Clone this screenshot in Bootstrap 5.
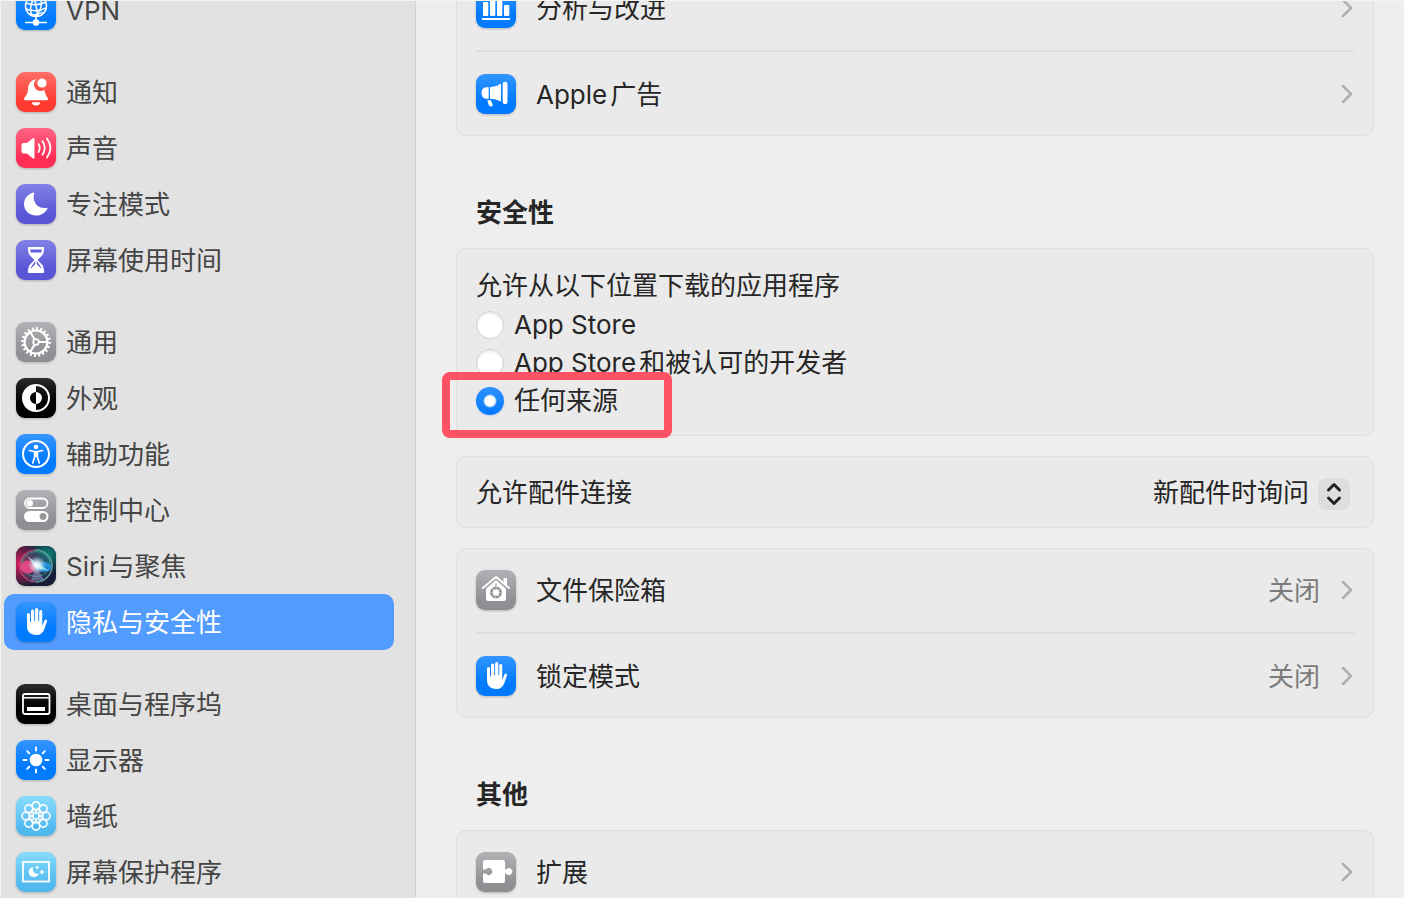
<!DOCTYPE html>
<html lang="zh-CN">
<head>
<meta charset="utf-8">
<meta name="viewport" content="width=device-width, initial-scale=1">
<title>隐私与安全性</title>
<link href="https://cdn.jsdelivr.net/npm/bootstrap@5.3.0/dist/css/bootstrap.min.css" rel="stylesheet">
<style>
  body { background: #eee; color: #262626; font-family: Inter, "Noto Sans CJK SC", sans-serif; font-size: 26px; line-height: 38px; }
  a { color: inherit; text-decoration: none; }
  .settings { border-top: 1px solid #f4f4f4; border-left: 1px solid #f2f2f2; }
  .side { width: 415px; background: #e2e2e2; border-right: 1px solid #d2d2d2; color: #454545; padding: 0 21px 0 3px; }
  .side-group { margin-bottom: 26px; }
  .side-group:first-child { margin-top: -19px; }
  .side-link { height: 56px; padding: 2px 12px 0; gap: 10px; border-radius: 10px; }
  .side-link.active { background: #529bff; color: #fff; }
  .tile { width: 40px; height: 40px; margin-bottom: 2px; flex-shrink: 0; border-radius: 9px; filter: drop-shadow(0 1px 1px rgba(0,0,0,.22)); color: #fff; }
  .tile svg { display: block; width: 40px; height: 40px; }
  .t-blue { background: linear-gradient(#3395ff, #007aff 70%); color: #fff; }
  .t-red { background: linear-gradient(#ff6f66, #ff3b30 75%); }
  .t-pink { background: linear-gradient(#ff6384, #ff2d55 75%); }
  .t-indigo { background: linear-gradient(#8280e6, #5856d6 75%); }
  .t-gray { background: linear-gradient(#b1b1b6, #8e8e93 80%); color: #fff; }
  .t-black { background: linear-gradient(#2b2b2b, #000 60%); }
  .t-sky { background: linear-gradient(#87dcf9, #52b9ef 80%); }
  .t-siri { background: #171d36; overflow: hidden; }
  .latin { margin-right: 3px; }
  .pane { padding: 0 30px 0 40px; }
  .panel { background: #eaeaea; border-radius: 10px; box-shadow: inset 0 0 0 1px #dfdfdf; padding: 0 20px; margin-bottom: 20px; }
  .pane > .panel:first-child { margin-top: -35px; }
  .pane-row { height: 84px; gap: 20px; padding-top: 2px; }
  .pane-row + .pane-row { border-top: 2px solid #dedede; height: 86px; }
  .state { color: #7b7b7b; }
  .chev { width: 14px; height: 20px; margin-bottom: 2px; color: #b0b0b0; }
  .pane-title { font-size: 26px; line-height: 36px; font-weight: 700; margin: 59px 20px 17px; }
  .source { padding-top: 18px; padding-bottom: 16px; }
  .source legend { font-size: 26px; line-height: 40px; margin: 0; }
  .choice { height: 38px; gap: 10px; }
  .choice .form-check-input { width: 28px; height: 28px; margin: 0; border: 1px solid #cfcfcf; background-color: #fff; box-shadow: inset 0 2px 2px rgba(0,0,0,.07); }
  .choice .form-check-input:checked { border: 0; background: radial-gradient(circle, #fff 5px, transparent 7px), linear-gradient(#2f90ff, #007aff); box-shadow: 0 1px 2px rgba(0,80,255,.2); }
  .marker { left: -34px; top: -10px; width: 230px; height: 66px; border: 8px solid #ff5264; border-radius: 8px; pointer-events: none; }
  .accessory { height: 72px; padding: 2px 24px 0 20px; }
  .picker select { appearance: none; border: 0; background: none; color: inherit; padding: 0 40px 0 0; height: 38px; line-height: 38px; }
  .stepper { right: 0; top: 4px; width: 32px; height: 32px; border-radius: 8px; background: #dedede; pointer-events: none; }
</style>
</head>
<body>
<div class="settings d-flex vh-100 overflow-hidden">
  <nav class="side flex-shrink-0" aria-label="设置">
    <div class="side-group">
      <a href="#" class="side-link d-flex align-items-center"><span class="tile t-blue"><svg viewBox="0 0 40 40" fill="none" stroke="currentColor" stroke-width="1.5"><circle cx="20" cy="16" r="10.5"/><ellipse cx="20" cy="16" rx="5" ry="10.5" transform="rotate(12 20 16)"/><path d="M10 13q10 4 20-1M10 19q10 4 20-1M12 9q8 4 15-1M13 24q8 2 14-2M18 5.500l4 21M20 27v5M9 32.500h22" /><circle cx="20" cy="32.500" r="2.500" fill="currentColor"/></svg></span>VPN</a>
    </div>
    <div class="side-group">
      <a href="#" class="side-link d-flex align-items-center"><span class="tile t-red"><svg viewBox="0 0 40 40" fill="currentColor"><path d="M20.500 7.200c-5.600.6-8.500 5-8.500 10 0 6-4 7.500-4 9.800 0 .8.600 1.200 1.500 1.200h21c.9 0 1.500-.4 1.500-1.200 0-2-3-3.500-3.500-9.300a6.300 6.300 0 0 1-8-10.500Z"/><circle cx="26" cy="11" r="4.600"/><path d="M16 30.300h8a4 3.200 0 0 1-8 0Z"/></svg></span>通知</a>
      <a href="#" class="side-link d-flex align-items-center"><span class="tile t-pink"><svg viewBox="0 0 40 40" fill="currentColor"><path d="M5.500 17q0-2 2-2H11l5.500-4.600q2-1.300 2 .8v18.200q0 2-2 .8L11 25.500H7.500q-2 0-2-2Z"/><path d="M22.500 16q2.500 4 0 8M26.500 13.300q4.500 6.700 0 13.400M31 10.500q7 9.500 0 19" fill="none" stroke="currentColor" stroke-width="1.800" stroke-linecap="round"/></svg></span>声音</a>
      <a href="#" class="side-link d-flex align-items-center"><span class="tile t-indigo"><svg viewBox="0 0 40 40" fill="currentColor"><path d="M17.500 8.500q1-.5.600.8c-2.300 8.500 3.500 16 12.600 14.600q1.300-.2.600 1C29 29 25 31.500 20 31.500c-7 0-12-5-12-11.500 0-5 3.500-9.800 9.500-11.500Z"/></svg></span>专注模式</a>
      <a href="#" class="side-link d-flex align-items-center"><span class="tile t-indigo"><svg viewBox="0 0 40 40"><path d="M12.500 7h15q1 .8.500 2.500 0 3.500-2 6L21.500 20l4.500 4.500q2 2.500 2 6 .5 1.700-.5 2.500h-15q-1-.8-.5-2.500 0-3.500 2-6l4.500-4.500-4.500-4.500q-2-2.500-2-6-.5-1.700.5-2.500Z" fill="currentColor"/><path d="M14.200 9.500h11.600q0 1.500-.5 3H14.700q-.5-1.500-.5-3ZM19.300 21v3l-4.800 5q.2-2 1.500-3.500ZM20.700 21v3l4.800 5q-.2-2-1.500-3.500Z" fill="#625fd9"/></svg></span>屏幕使用时间</a>
    </div>
    <div class="side-group">
      <a href="#" class="side-link d-flex align-items-center"><span class="tile t-gray"><svg viewBox="0 0 40 40" fill="none" stroke="currentColor"><circle cx="20" cy="20" r="11.500" stroke-width="2.200"/><circle cx="20" cy="20" r="13.600" stroke-width="2.600" pathLength="100" stroke-dasharray="2.300 2.700"/><circle cx="20" cy="20" r="2.800" stroke-width="1.800"/><path d="M23 20h8.500M18.500 17.300l-4.300-7.300M18.500 22.700l-4.300 7.300" stroke-width="2"/></svg></span>通用</a>
      <a href="#" class="side-link d-flex align-items-center"><span class="tile t-black"><svg viewBox="0 0 40 40"><circle cx="20" cy="20" r="13" fill="none" stroke="currentColor" stroke-width="2"/><path d="M20 7a13 13 0 0 0 0 26v-7a6 6 0 0 1 0-12ZM20 14a6 6 0 0 1 0 12Z" fill="currentColor"/></svg></span>外观</a>
      <a href="#" class="side-link d-flex align-items-center"><span class="tile t-blue"><svg viewBox="0 0 40 40"><circle cx="20" cy="20" r="13" fill="none" stroke="currentColor" stroke-width="2"/><circle cx="20" cy="13" r="2.300" fill="currentColor"/><path d="M13.500 16.500 18 17.500h4l4.500-1M18.600 18v5l-1.800 6M21.400 18v5l1.800 6" fill="none" stroke="currentColor" stroke-width="1.700" stroke-linecap="round" stroke-linejoin="round"/><path d="M18 17.500h4V23h-4Z" fill="currentColor"/></svg></span>辅助功能</a>
      <a href="#" class="side-link d-flex align-items-center"><span class="tile t-gray"><svg viewBox="0 0 40 40"><rect x="9" y="8.500" width="22.500" height="9.500" rx="4.750" fill="none" stroke="currentColor" stroke-width="1.800"/><circle cx="13.800" cy="13.200" r="3.200" fill="currentColor"/><rect x="8" y="21" width="24.500" height="11" rx="5.500" fill="currentColor"/><circle cx="27" cy="26.500" r="3.400" fill="#98989d"/></svg></span>控制中心</a>
      <a href="#" class="side-link d-flex align-items-center"><span class="tile t-siri"><svg viewBox="0 0 40 40"><defs><radialGradient id="sr"><stop stop-color="#d81f5d"/><stop offset="1" stop-color="#d81f5d" stop-opacity="0"/></radialGradient><radialGradient id="sg"><stop stop-color="#0b7d77"/><stop offset="1" stop-color="#0b7d77" stop-opacity="0"/></radialGradient><radialGradient id="sw"><stop stop-color="#fff"/><stop offset=".35" stop-color="#e8fbff" stop-opacity=".8"/><stop offset="1" stop-color="#cfeeff" stop-opacity="0"/></radialGradient></defs><circle cx="4" cy="18" r="24" fill="url(#sr)"/><circle cx="32" cy="8" r="20" fill="url(#sg)"/><circle cx="20" cy="20" r="16" fill="#3b5580" fill-opacity=".4" stroke="#e8578c" stroke-opacity=".7" stroke-width="1.200"/><path d="M20 4a16 16 0 0 1 0 32" fill="none" stroke="#43bba5" stroke-opacity=".8" stroke-width="1.300"/><ellipse cx="20" cy="18" rx="14" ry="12.500" fill="none" stroke="#35a98b" stroke-opacity=".8"/><ellipse cx="12" cy="21" rx="7.500" ry="6.500" fill="#f24c86" fill-opacity=".85"/><ellipse cx="28" cy="21" rx="7.500" ry="5" fill="#2398e6" fill-opacity=".85"/><path d="m20 20 8 14-13 1Z" fill="#9998cb" opacity=".5"/><path d="M11 10 33 25 20 22Z" fill="#b9fff0" opacity=".65"/><circle cx="21" cy="19" r="9" fill="url(#sw)"/></svg></span><span><span class="latin">Siri</span>与聚焦</span></a>
      <a href="#" class="side-link active d-flex align-items-center" aria-current="page"><span class="tile t-blue"><svg viewBox="0 0 40 40"><path id="palm" d="M11 12.500a1.500 1.500 0 0 1 3 0V20h1V9a1.600 1.600 0 0 1 3.200 0v10h.9V7.700a1.600 1.600 0 0 1 3.200 0V19h.9V9.500a1.500 1.500 0 0 1 3 0V24l2.300-5.500c.8-1.700 2.900-1 2.500.8l-2.800 8.200C26.800 31 24.500 33 20.500 33 14 33 11 29.500 11 24Z" fill="currentColor"/></svg></span>隐私与安全性</a>
    </div>
    <div class="side-group">
      <a href="#" class="side-link d-flex align-items-center"><span class="tile t-black"><svg viewBox="0 0 40 40"><rect x="7" y="10" width="26.500" height="20" rx="2" fill="none" stroke="currentColor" stroke-width="1.800"/><path d="M7 13.800h26" stroke="currentColor" stroke-width="1.500"/><path d="M11 23h18v4H11Z" fill="currentColor"/></svg></span>桌面与程序坞</a>
      <a href="#" class="side-link d-flex align-items-center"><span class="tile t-blue"><svg viewBox="0 0 40 40"><circle cx="20" cy="20" r="6.300" fill="currentColor"/><path d="M20 7.500v3M20 29.500v3M7.500 20h3M29.500 20h3M11.200 11.200l2.100 2.100M26.700 26.700l2.100 2.100M28.800 11.200l-2.100 2.100M13.300 26.700l-2.100 2.100" stroke="currentColor" stroke-width="1.900" stroke-linecap="round"/></svg></span>显示器</a>
      <a href="#" class="side-link d-flex align-items-center"><span class="tile t-sky"><svg viewBox="0 0 40 40" fill="none" stroke="currentColor" stroke-width="1.600"><defs><g id="petal"><circle cx="20" cy="9.700" r="3.800"/><path d="M17.300 12.400 21.500 18M22.700 12.400 18.500 18" stroke-width="1.200"/></g></defs><use href="#petal"/><use href="#petal" transform="rotate(45 20 20)"/><use href="#petal" transform="rotate(90 20 20)"/><use href="#petal" transform="rotate(135 20 20)"/><use href="#petal" transform="rotate(180 20 20)"/><use href="#petal" transform="rotate(225 20 20)"/><use href="#petal" transform="rotate(270 20 20)"/><use href="#petal" transform="rotate(315 20 20)"/></svg></span>墙纸</a>
      <a href="#" class="side-link d-flex align-items-center"><span class="tile t-sky"><svg viewBox="0 0 40 40"><rect x="7" y="10" width="26" height="19.500" fill="none" stroke="currentColor" stroke-width="1.800"/><path d="M17 15c-1 5 2 7.500 6 6.500-1 2.500-3 3.500-5 3.500a5 5 0 0 1-5.300-5c0-2.300 1.800-4.300 4.300-5ZM21 13.300l.7 1.500 1.500.7-1.500.7-.7 1.500-.7-1.500-1.500-.7 1.500-.7ZM26 17l.9 2.100 2.100.9-2.100.9L26 23l-.9-2.100L23 20l2.100-.9Z" fill="currentColor"/></svg></span>屏幕保护程序</a>
    </div>
  </nav>

  <main class="pane flex-grow-1">
    <section class="panel">
      <a href="#" class="pane-row d-flex align-items-center"><span class="tile t-blue"><svg viewBox="0 0 40 40" fill="currentColor"><rect x="7" y="14" width="5.300" height="14" rx="1"/><rect x="14" y="8" width="5.300" height="20" rx="1"/><rect x="21" y="12" width="5.300" height="16" rx="1"/><rect x="28" y="17" width="5.300" height="11" rx="1"/><path d="M6 30h28v2H6Z"/></svg></span><span class="flex-grow-1">分析与改进</span><svg class="chev" viewBox="0 0 14 20" fill="none" stroke="currentColor" stroke-width="2.600" stroke-linecap="round" stroke-linejoin="round"><path d="m3 2 8 8-8 8"/></svg></a>
      <a href="#" class="pane-row d-flex align-items-center"><span class="tile t-blue"><svg viewBox="0 0 40 40" fill="currentColor"><path d="M12.700 13.300v11.500H10q-4.500-.5-4.500-5.700t4.500-5.800ZM14 13.300q6-.3 11-3.600v17.800q-5-2.500-11-2.800ZM26.700 10q0-2.300 2.400-2.300t2.400 2.300v18q0 2.300-2.400 2.300T26.700 28ZM11.300 26.200h3.500l2 4.300q.3 2-1.800 2t-2.500-2Z"/></svg></span><span class="flex-grow-1"><span class="latin">Apple</span>广告</span><svg class="chev" viewBox="0 0 14 20" fill="none" stroke="currentColor" stroke-width="2.600" stroke-linecap="round" stroke-linejoin="round"><path d="m3 2 8 8-8 8"/></svg></a>
    </section>

    <h2 class="pane-title">安全性</h2>
    <fieldset class="panel source">
      <legend>允许从以下位置下载的应用程序</legend>
      <div class="choice d-flex align-items-center"><input class="form-check-input" type="radio" name="source" id="s1"><label for="s1">App Store</label></div>
      <div class="choice d-flex align-items-center"><input class="form-check-input" type="radio" name="source" id="s2"><label for="s2"><span class="latin">App Store</span>和被认可的开发者</label></div>
      <div class="choice d-flex align-items-center position-relative"><input class="form-check-input" type="radio" name="source" id="s3" checked><label for="s3">任何来源</label><span class="marker position-absolute"></span></div>
    </fieldset>

    <section class="panel accessory d-flex align-items-center justify-content-between">
      <label for="accessory">允许配件连接</label>
      <div class="picker position-relative d-flex">
        <select id="accessory"><option>新配件时询问</option></select>
        <svg class="stepper position-absolute" viewBox="0 0 32 32" fill="none" stroke="#222" stroke-width="3" stroke-linecap="round" stroke-linejoin="round"><path d="m10.500 12 5.500-5.500 5.500 5.500M10.500 20l5.500 5.500 5.500-5.500"/></svg>
      </div>
    </section>

    <section class="panel">
      <a href="#" class="pane-row d-flex align-items-center"><span class="tile t-gray"><svg viewBox="0 0 40 40"><path d="M6.800 18 20 7l13.200 11" fill="none" stroke="currentColor" stroke-width="1.900" stroke-linecap="round" stroke-linejoin="round"/><path d="M27.500 8h3.500v7.500l-3.500-3ZM20 10.300l10 8.500V29q0 2-2 2H12q-2 0-2-2V18.800Z" fill="currentColor"/><circle cx="20" cy="22.500" r="4.600" fill="none" stroke="#929297" stroke-width="2.800"/><circle cx="20" cy="22.500" r="4.600" fill="none" stroke="#d9d9dc" stroke-width="2.800" pathLength="64" stroke-dasharray="1.500 6.500"/><path d="M20 13.500v2.500" stroke="#929297" stroke-width="1.200"/></svg></span><span class="flex-grow-1">文件保险箱</span><span class="state">关闭</span><svg class="chev" viewBox="0 0 14 20" fill="none" stroke="currentColor" stroke-width="2.600" stroke-linecap="round" stroke-linejoin="round"><path d="m3 2 8 8-8 8"/></svg></a>
      <a href="#" class="pane-row d-flex align-items-center"><span class="tile t-blue"><svg viewBox="0 0 40 40"><use href="#palm"/></svg></span><span class="flex-grow-1">锁定模式</span><span class="state">关闭</span><svg class="chev" viewBox="0 0 14 20" fill="none" stroke="currentColor" stroke-width="2.600" stroke-linecap="round" stroke-linejoin="round"><path d="m3 2 8 8-8 8"/></svg></a>
    </section>

    <h2 class="pane-title">其他</h2>
    <section class="panel">
      <a href="#" class="pane-row d-flex align-items-center"><span class="tile t-gray"><svg viewBox="0 0 40 40"><path d="M9 8h18q2 0 2 2v7.500q.8.300 1.300-.3a3.400 3.400 0 1 1 0 4.600q-.5-.6-1.300-.3V29q0 2-2 2H9q-2 0-2-2v-7.500h2q.8 0 1.300.6a3.500 3.500 0 1 0 0-5.200q-.5.600-1.300.6H7V10q0-2 2-2Z" fill="currentColor"/></svg></span><span class="flex-grow-1">扩展</span><svg class="chev" viewBox="0 0 14 20" fill="none" stroke="currentColor" stroke-width="2.600" stroke-linecap="round" stroke-linejoin="round"><path d="m3 2 8 8-8 8"/></svg></a>
    </section>
  </main>
</div>
<script src="https://cdn.jsdelivr.net/npm/bootstrap@5.3.0/dist/js/bootstrap.bundle.min.js"></script>
</body>
</html>
